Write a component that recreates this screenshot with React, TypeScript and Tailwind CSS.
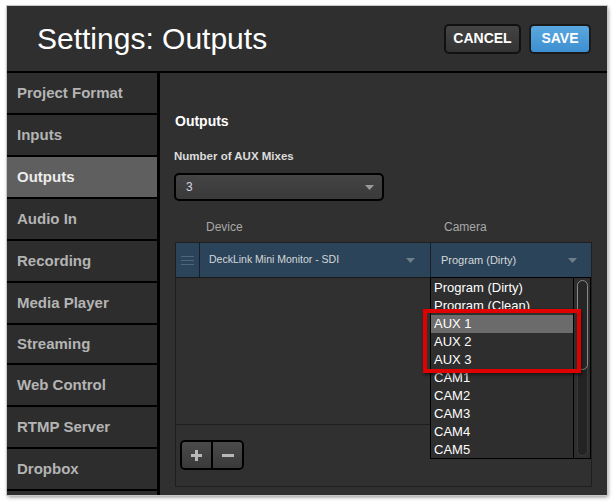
import React from 'react';

const navItems = [
  'Project Format',
  'Inputs',
  'Outputs',
  'Audio In',
  'Recording',
  'Media Player',
  'Streaming',
  'Web Control',
  'RTMP Server',
  'Dropbox',
  '',
];

const cameraOptions = [
  'Program (Dirty)',
  'Program (Clean)',
  'AUX 1',
  'AUX 2',
  'AUX 3',
  'CAM1',
  'CAM2',
  'CAM3',
  'CAM4',
  'CAM5',
];

const Caret: React.FC<{ color: string }> = ({ color }) => (
  <svg width="9" height="5" viewBox="0 0 9 5">
    <path d="M0 0 L9 0 L4.5 5 Z" fill={color} />
  </svg>
);

const App: React.FC = () => {
  return (
    <div className="w-[614px] h-[503px] bg-white pt-[6px] pl-[7px]" style={{ fontFamily: '"Liberation Sans", Arial, sans-serif' }}>
      <div className="w-[600px] h-[489px] bg-[#2f2f2f] flex flex-col overflow-hidden shadow-[1px_2px_4px_rgba(0,0,0,0.45)] outline outline-1 outline-[#c8c8c8]">
        {/* header */}
        <header className="h-[67px] shrink-0 flex items-center justify-between border-b-2 border-black pl-[30px] pr-[16px]">
          <h1 className="text-[30px] text-white leading-none">Settings: Outputs</h1>
          <div className="flex items-center gap-[8px]">
            <button className="w-[77px] h-[30px] rounded-[5px] border-2 border-[#111] bg-gradient-to-b from-[#444] to-[#333] text-white font-bold text-[14px]">
              CANCEL
            </button>
            <button className="w-[62px] h-[30px] rounded-[5px] border-2 border-[#1a1a1a] bg-gradient-to-b from-[#5aa8e0] to-[#3d8fd0] text-white font-bold text-[14px]">
              SAVE
            </button>
          </div>
        </header>

        <div className="flex flex-1 min-h-0">
          {/* sidebar */}
          <nav className="w-[153px] shrink-0 border-r-[3px] border-black bg-[#2d2d2d] flex flex-col">
            {navItems.map((item, i) => (
              <div
                key={i}
                className={`${item === 'Streaming' ? 'h-[40px]' : 'h-[42px]'} shrink-0 flex items-center pl-[10px] border-b-2 border-black font-bold text-[15px] ${
                  item === 'Outputs' ? 'bg-[#5f5f5f] text-[#ececec]' : 'text-[#b4b4b4]'
                }`}
              >
                {item}
              </div>
            ))}
          </nav>

          {/* main */}
          <main className="flex-1 bg-[#303030] pl-[14px] pr-[15px] pt-[40px]">
            <h2 className="text-[14px] font-bold text-white leading-[16px] pl-[1px]">Outputs</h2>
            <div className="mt-[20px] text-[11.5px] font-bold text-[#dcdcdc] leading-[14px]">Number of AUX Mixes</div>
            <div className="mt-[10px] w-[210px] h-[28px] rounded-[5px] border-2 border-black bg-gradient-to-b from-[#444] to-[#3a3a3a] flex items-center justify-between pl-[10px] pr-[8px]">
              <span className="text-[12px] text-[#cfd8e0]">3</span>
              <Caret color="#9a9a9a" />
            </div>

            <div className="mt-[19px] ml-[1px] flex text-[12px] text-[#a8a8a8] leading-[14px]">
              <div className="w-[255px] pl-[31px]">Device</div>
              <div className="pl-[14px]">Camera</div>
            </div>

            {/* table */}
            <div className="relative mt-[8px] ml-[1px] w-[417px] h-[245px] border border-[#1f1f1f] flex flex-col">
              <div className="h-[35px] shrink-0 flex bg-[#2c4459] border-b border-[#1a1a1a]">
                <div className="w-[24px] border-r border-[#15202a] flex items-center justify-center">
                  <svg width="13" height="9" viewBox="0 0 13 9">
                    <path d="M0 0.5 H13 M0 4.5 H13 M0 8.5 H13" stroke="#4f6678" strokeWidth="1" />
                  </svg>
                </div>
                <div className="w-[231px] border-r border-[#15202a] flex items-center justify-between pl-[9px] pr-[15px]">
                  <span className="text-[10.5px] text-[#d4d8dc]">DeckLink Mini Monitor - SDI</span>
                  <Caret color="#6e7f8c" />
                </div>
                <div className="flex-1 flex items-center justify-between pl-[10px] pr-[14px]">
                  <span className="text-[11px] text-[#d4d8dc]">Program (Dirty)</span>
                  <Caret color="#6e7f8c" />
                </div>
              </div>
              <div className="flex-1 border-b border-[#1f1f1f]" />
              <div className="h-[61px] shrink-0 pt-[15px] pl-[4px]">
                <div className="inline-flex h-[30px] rounded-[5px] border-2 border-black overflow-hidden">
                  <div className="w-[31px] bg-gradient-to-b from-[#4a4a4a] to-[#3a3a3a] border-r-2 border-black flex items-center justify-center">
                    <svg width="11" height="11" viewBox="0 0 11 11">
                      <path d="M5.5 0 V11 M0 5.5 H11" stroke="#b8b8b8" strokeWidth="3" />
                    </svg>
                  </div>
                  <div className="w-[29px] bg-gradient-to-b from-[#4a4a4a] to-[#3a3a3a] flex items-center justify-center">
                    <svg width="12" height="3" viewBox="0 0 12 3">
                      <path d="M0 1.5 H12" stroke="#b8b8b8" strokeWidth="3" />
                    </svg>
                  </div>
                </div>
              </div>

              {/* open camera dropdown */}
              <div className="absolute left-[254px] top-[34px] w-[161px] h-[182px] bg-[#2e2e2e] border border-black flex">
                <div className="flex-1 border-r border-black pt-[1px]">
                  {cameraOptions.map((opt) => (
                    <div
                      key={opt}
                      className={`h-[18px] leading-[18px] pl-[3px] text-[13px] text-white ${opt === 'AUX 1' ? 'bg-[#6b6b6b]' : ''}`}
                    >
                      {opt}
                    </div>
                  ))}
                </div>
                <div className="w-[16px] shrink-0 pt-[2px] pb-[2px] flex justify-center">
                  <div className="relative w-[11px] h-full rounded-full bg-[#232323] border border-[#3a3a3a]">
                    <div className="absolute left-[-1px] top-[-1px] w-[11px] h-[90px] rounded-full border border-[#8a8a8a] bg-[#262626]" />
                  </div>
                </div>
              </div>

              {/* highlight box */}
              <div className="absolute left-[247px] top-[66px] w-[158px] h-[64px] border-[4px] border-[#e00000] shadow-[1px_2px_3px_rgba(0,0,0,0.5)]" />
            </div>
          </main>
        </div>
      </div>
    </div>
  );
};

export default App;
